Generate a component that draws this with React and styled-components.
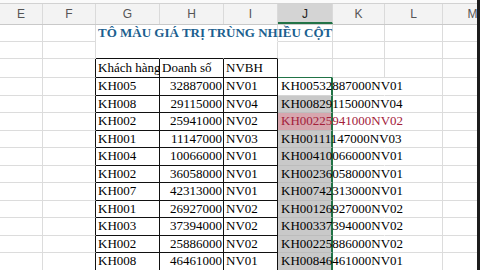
import React from "react";
import styled, { createGlobalStyle, css } from "styled-components";

const GlobalStyle = createGlobalStyle`
  html, body { margin: 0; padding: 0; background: #fff; overflow: hidden; }
  #root { width: 480px; height: 270px; }
`;

const W = { E: 43, F: 53, G: 64, H: 64, I: 54, J: 55, K: 52, L: 58, M: 60 };
const COLS = ["E", "F", "G", "H", "I", "J", "K", "L", "M"];

const GRID = "#dcdcdc";
const INK = "#111";
const SEL = "#217346";

const Sheet = styled.div`
  display: flex;
  width: 480px;
  height: 270px;
  overflow: hidden;
  background: #fff;
`;

const Grid = styled.div`
  display: flex;
  flex-direction: column;
  flex: 0 0 477px;
  width: 477px;
  overflow: hidden;
`;

const Edge = styled.div`
  flex: 0 0 3px;
  background: #1c1c1c;
`;

const TopGap = styled.div`
  flex: 0 0 auto;
  height: 3px;
  border-bottom: 1px solid #d2d2d2;
  background: #fafafa;
`;

const HeaderBar = styled.div`
  flex: 0 0 auto;
  display: flex;
  height: 21px;
  box-sizing: border-box;
  background: #f3f3f3;
  border-bottom: 1px solid #c9c9c9;
`;

const ColHead = styled.div`
  box-sizing: border-box;
  flex: 0 0 ${(p) => p.$w}px;
  min-width: 0;
  display: flex;
  align-items: center;
  justify-content: center;
  font-family: "Liberation Sans", Arial, sans-serif;
  font-size: 12px;
  color: ${(p) => (p.$active ? "#222" : "#555")};
  background: ${(p) => (p.$active ? "#d4d4d4" : "transparent")};
  border-right: 1px solid #dadada;
  ${(p) =>
    p.$active &&
    css`
      border-bottom: 2px solid ${SEL};
      padding-top: 2px;
    `}
`;

const Row = styled.div`
  flex: 0 0 auto;
  display: flex;
  height: ${(p) => p.$h}px;
  font-family: "Liberation Serif", "Times New Roman", serif;
  font-size: 13px;
`;

const Cell = styled.div`
  box-sizing: border-box;
  flex: 0 0 ${(p) => p.$w}px;
  min-width: 0;
  height: 100%;
  display: flex;
  align-items: center;
  justify-content: ${(p) => (p.$align === "right" ? "flex-end" : "flex-start")};
  padding: 0 ${(p) => (p.$align === "right" ? 1 : 0)}px 0 ${(p) => p.$pl ?? 2}px;
  border-right: ${(p) => p.$rw || 1}px solid ${(p) => p.$r || GRID};
  border-bottom: 1px solid ${(p) => p.$b || GRID};
  background: ${(p) => p.$bg || "#fff"};
  color: ${(p) => p.$color || "#000"};
  white-space: nowrap;
  ${(p) =>
    p.$spill &&
    css`
      position: relative;
      z-index: 1;
    `}
`;

const Title = styled.span`
  font-weight: bold;
  font-size: 13px;
  color: #1c5f8f;
`;

const data = [
  ["KH005", "32887000", "NV01"],
  ["KH008", "29115000", "NV04"],
  ["KH002", "25941000", "NV02"],
  ["KH001", "11147000", "NV03"],
  ["KH004", "10066000", "NV01"],
  ["KH002", "36058000", "NV01"],
  ["KH007", "42313000", "NV01"],
  ["KH001", "26927000", "NV02"],
  ["KH003", "37394000", "NV02"],
  ["KH002", "25886000", "NV02"],
  ["KH008", "46461000", "NV01"],
];

const DUP = 2;

function TitleRow() {
  return (
    <Row $h={17}>
      <Cell $w={W.E} />
      <Cell $w={W.F} />
      <Cell $w={W.G} $r="#fff" $b="#fff" $spill>
        <Title>TÔ MÀU GIÁ TRỊ TRÙNG NHIỀU CỘT</Title>
      </Cell>
      <Cell $w={W.H} $r="#fff" $b="#fff" />
      <Cell $w={W.I} $b="#fff" />
      <Cell $w={W.J} />
      <Cell $w={W.K} />
      <Cell $w={W.L} />
      <Cell $w={W.M} />
    </Row>
  );
}

function BlankRow() {
  return (
    <Row $h={17}>
      <Cell $w={W.E} />
      <Cell $w={W.F} />
      <Cell $w={W.G} $r="#fff" $b={INK} />
      <Cell $w={W.H} $r="#fff" $b={INK} />
      <Cell $w={W.I} $b={INK} />
      <Cell $w={W.J} />
      <Cell $w={W.K} />
      <Cell $w={W.L} />
      <Cell $w={W.M} />
    </Row>
  );
}

function TableHead() {
  return (
    <Row $h={19}>
      <Cell $w={W.E} />
      <Cell $w={W.F} $r={INK} />
      <Cell $w={W.G} $r={INK} $b={INK}>Khách hàng</Cell>
      <Cell $w={W.H} $r={INK} $b={INK}>Doanh số</Cell>
      <Cell $w={W.I} $r={INK} $b={INK}>NVBH</Cell>
      <Cell $w={W.J} $b={SEL} />
      <Cell $w={W.K} />
      <Cell $w={W.L} />
      <Cell $w={W.M} />
    </Row>
  );
}

function DataRow({ row, index }) {
  const [kh, ds, nv] = row;
  const first = index === 0;
  const dup = index === DUP;
  const jBg = first ? "#fff" : dup ? "#d7a6ae" : "#c9c9c9";
  const jColor = dup ? "#a3203a" : "#000";
  return (
    <Row $h={17.5}>
      <Cell $w={W.E} />
      <Cell $w={W.F} $r={INK} />
      <Cell $w={W.G} $r={INK} $b={INK}>{kh}</Cell>
      <Cell $w={W.H} $r={INK} $b={INK} $align="right">{ds}</Cell>
      <Cell $w={W.I} $r={INK} $b={INK}>{nv}</Cell>
      <Cell
        $w={W.J}
        $r={SEL}
        $rw={2}
        $b={first ? "#d6d6d6" : "#bdbdbd"}
        $bg={jBg}
        $color={jColor}
        $pl={3}
        $spill
      >
        {kh + ds + nv}
      </Cell>
      <Cell $w={W.K} $r="#fff" />
      <Cell $w={W.L} />
      <Cell $w={W.M} />
    </Row>
  );
}

export default function App() {
  return (
    <>
      <GlobalStyle />
      <Sheet>
        <Grid>
          <TopGap />
          <HeaderBar>
            {COLS.map((c) => (
              <ColHead key={c} $w={W[c]} $active={c === "J"}>
                {c}
              </ColHead>
            ))}
          </HeaderBar>
          <TitleRow />
          <BlankRow />
          <TableHead />
          {data.map((r, i) => (
            <DataRow key={i} row={r} index={i} />
          ))}
        </Grid>
        <Edge />
      </Sheet>
    </>
  );
}
